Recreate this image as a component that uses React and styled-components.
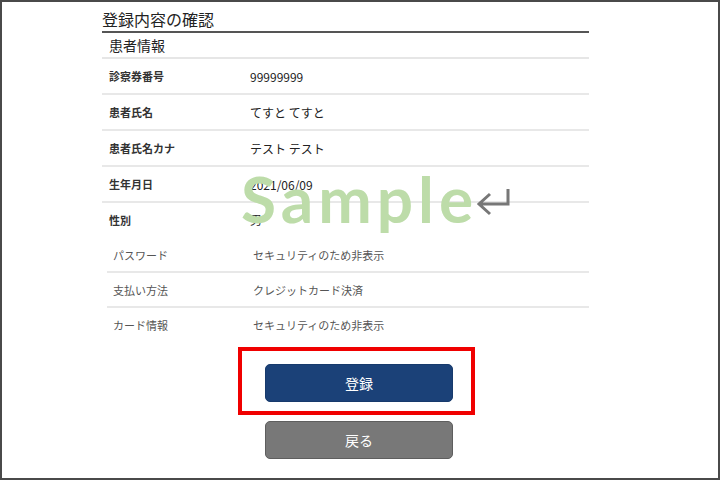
import React from "react";
import styled, { createGlobalStyle } from "styled-components";

const GlobalStyle = createGlobalStyle`
  html, body {
    margin: 0;
    padding: 0;
    background: #ffffff;
  }
  body {
    font-family: "Noto Sans CJK JP", "Noto Sans", sans-serif;
    color: #222;
  }
`;

const Frame = styled.div`
  position: relative;
  box-sizing: border-box;
  width: 720px;
  height: 480px;
  border: 2px solid #4a4a4a;
  overflow: hidden;
  background: #fff;
`;

const Column = styled.div`
  margin-left: 100px;
  width: 487px;
`;

const Title = styled.h1`
  margin: 0;
  padding: 7px 0 2px;
  font-size: 16px;
  line-height: 20px;
  font-weight: 400;
  color: #222;
  border-bottom: 2px solid #555;
`;

const SectionHead = styled.div`
  padding-left: 7px;
  height: 24px;
  line-height: 24px;
  font-size: 14px;
  color: #222;
  border-bottom: 2px solid #e6e6e6;
`;

const Table = styled.div`
  margin-left: ${(p) => (p.$indent ? "5px" : "0")};
`;

const Row = styled.div`
  display: flex;
  align-items: center;
  height: ${(p) => (p.$sub || p.$last ? "33px" : "34px")};
  padding-left: ${(p) => (p.$sub ? "6px" : "7px")};
  border-bottom: ${(p) => (p.$last ? "2px solid transparent" : "2px solid #e8e8e8")};
`;

const Label = styled.div`
  width: ${(p) => (p.$sub ? "140px" : "141px")};
  font-size: 11px;
  font-weight: ${(p) => (p.$sub ? 400 : 700)};
  color: ${(p) => (p.$sub ? "#555" : "#333")};
`;

const Value = styled.div`
  font-size: ${(p) => (p.$sub ? "11px" : "12px")};
  color: ${(p) => (p.$sub ? "#555" : "#222")};
`;

const Buttons = styled.div`
  display: flex;
  flex-direction: column;
  align-items: flex-start;
  padding-top: 4px;
`;

const Highlight = styled.div`
  margin-left: 236px;
  border: 4px solid #f00000;
  padding: 13px 18px 9px 23px;
`;

const Button = styled.button`
  display: block;
  box-sizing: border-box;
  width: 188px;
  height: 38px;
  border-radius: 5px;
  border: 1px solid ${(p) => (p.$back ? "#5e5e5e" : "#173a6c")};
  background: ${(p) => (p.$back ? "#787878" : "#1b4178")};
  color: #fff;
  font-family: "Noto Sans CJK JP", sans-serif;
  font-size: 14px;
  cursor: pointer;
`;

const BackWrap = styled.div`
  margin-left: 263px;
  margin-top: 6px;
`;

const Watermark = styled.div`
  position: absolute;
  left: 239px;
  top: 157px;
  display: flex;
  align-items: flex-start;
  pointer-events: none;
`;

const WatermarkText = styled.span`
  font-family: "Lato", "DejaVu Sans", sans-serif;
  font-size: 64px;
  line-height: 80px;
  font-weight: 700;
  letter-spacing: 5px;
  color: #bddca9;
`;

const ReturnMark = styled.svg`
  margin-left: -3px;
  margin-top: 28px;
`;

const patient = [
  ["診察券番号", "99999999"],
  ["患者氏名", "てすと てすと"],
  ["患者氏名カナ", "テスト テスト"],
  ["生年月日", "2021/06/09"],
  ["性別", "男"],
];

const account = [
  ["パスワード", "セキュリティのため非表示"],
  ["支払い方法", "クレジットカード決済"],
  ["カード情報", "セキュリティのため非表示"],
];

export default function App() {
  return (
    <>
      <GlobalStyle />
      <Frame>
        <Column>
          <Title>登録内容の確認</Title>
          <SectionHead>患者情報</SectionHead>
          <Table>
            {patient.map(([k, v], i) => (
              <Row key={k} $last={i === patient.length - 1}>
                <Label>{k}</Label>
                <Value>{v}</Value>
              </Row>
            ))}
          </Table>
          <Table $indent>
            {account.map(([k, v], i) => (
              <Row key={k} $sub $last={i === account.length - 1}>
                <Label $sub>{k}</Label>
                <Value $sub>{v}</Value>
              </Row>
            ))}
          </Table>
        </Column>
        <Buttons>
          <Highlight>
            <Button>登録</Button>
          </Highlight>
          <BackWrap>
            <Button $back>戻る</Button>
          </BackWrap>
        </Buttons>
        <Watermark>
          <WatermarkText>Sample</WatermarkText>
          <ReturnMark width="38" height="32" viewBox="0 0 38 32">
            <path
              d="M33 2 V17 H4 M15 7 L4 17 L15 27"
              fill="none"
              stroke="#777"
              strokeWidth="3"
            />
          </ReturnMark>
        </Watermark>
      </Frame>
    </>
  );
}
